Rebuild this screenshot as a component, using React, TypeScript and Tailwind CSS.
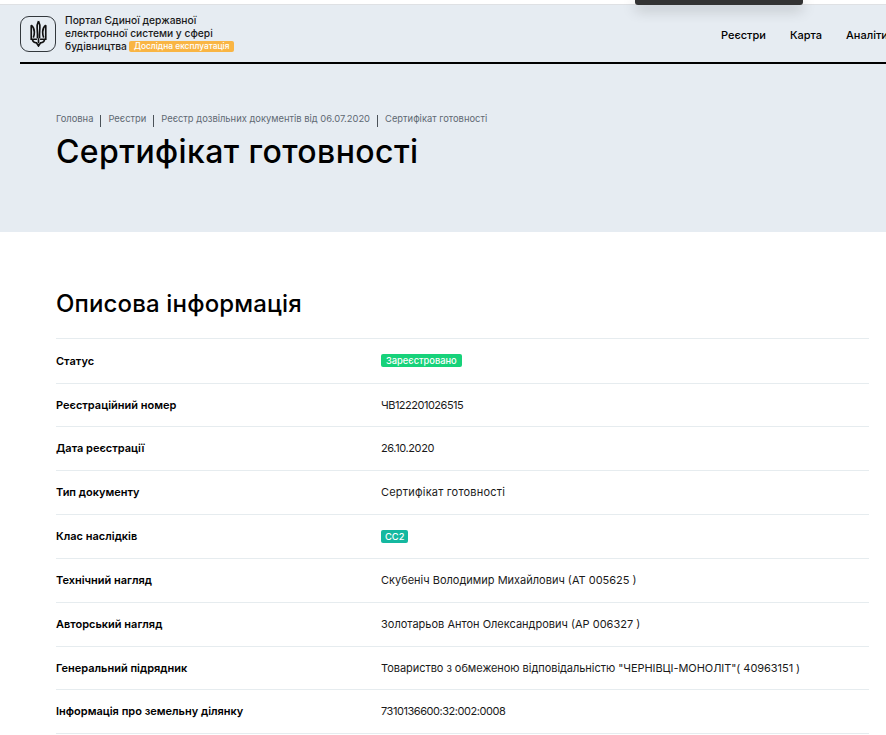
import React from 'react';

const rows: { label: string; value: string; badge?: string; spacing?: string }[] = [
  { label: 'Статус', value: 'Зареєстровано', badge: 'bg-[#17d27a] px-[5px]' },
  { label: 'Реєстраційний номер', value: 'ЧВ122201026515', spacing: 'tracking-[-0.5px]' },
  { label: 'Дата реєстрації', value: '26.10.2020', spacing: 'tracking-[-0.4px]' },
  { label: 'Тип документу', value: 'Сертифікат готовності', spacing: 'tracking-[0.2px]' },
  { label: 'Клас наслідків', value: 'СС2', badge: 'bg-[#14b8a0] px-[4px]' },
  { label: 'Технічний нагляд', value: 'Скубеніч Володимир Михайлович (АТ 005625 )' },
  { label: 'Авторський нагляд', value: 'Золотарьов Антон Олександрович (АР 006327 )' },
  { label: 'Генеральний підрядник', value: 'Товариство з обмеженою відповідальністю "ЧЕРНІВЦІ-МОНОЛІТ"( 40963151 )', spacing: 'tracking-[-0.05px]' },
  { label: 'Інформація про земельну ділянку', value: '7310136600:32:002:0008', spacing: 'tracking-[-0.45px]' },
];

const crumbs = ['Головна', 'Реєстри', 'Реєстр дозвільних документів від 06.07.2020', 'Сертифікат готовності'];

const Trident = () => (
  <svg width="17" height="27" viewBox="0 0 16 26" fill="none" stroke="#111" strokeWidth="1.6">
    <path d="M8 1c-1 2-1.600 4-1.300 7 .2 3 .5 6 .3 9.500M8 1c1 2 1.600 4 1.300 7-.2 3-.5 6-.3 9.500" />
    <path d="M1 5v13.500h5.500M15 5v13.500H9.500" />
    <path d="M1 5c2 1.500 3 3.500 3 6.500 0 2.500-.5 4.500-1 5.500M15 5c-2 1.500-3 3.500-3 6.500 0 2.500.5 4.500 1 5.500" />
    <path d="M2 18.500c.5 2.500 2.500 3.500 4 3.500l2 3 2-3c1.500 0 3.500-1 4-3.500" />
    <path d="M8 17.500v5" />
  </svg>
);

export default function App() {
  return (
    <div className="relative h-[735px] w-[886px] overflow-hidden bg-white font-['Inter',sans-serif] text-black">
      <div className="absolute left-[635px] top-0 z-10 h-[5px] w-[168px] rounded-b-[3px] bg-[#333333] shadow-[0_4px_14px_rgba(0,0,0,0.3)]" />

      <div className="h-[5px] border-b border-[#dfe1e4] bg-white" />

      <header className="h-[227px] bg-[#e6ecf2]">
        <div className="ml-5 flex h-[59px] items-center border-b-2 border-black">
          <div className="flex h-9 w-9 shrink-0 items-center justify-center rounded-[9px] border border-[#33383d]">
            <Trident />
          </div>
          <div className="ml-[9px] w-[190px] shrink-0 text-[10.250px] font-medium leading-[13px] text-[#1a1a1a]">
            <div className="whitespace-nowrap">Портал Єдиної державної</div>
            <div className="whitespace-nowrap">електронної системи у сфері</div>
            <div className="flex items-center whitespace-nowrap">
              будівництва
              <span className="ml-[2px] rounded-[2px] bg-[#f9b544] px-[5px] text-[8.400px] leading-[11px] text-white">
                Дослідна експлуатація
              </span>
            </div>
          </div>
          <nav className="flex shrink-0 gap-6 whitespace-nowrap pt-[4px] text-[11px] font-medium">
            <span className="ml-[466px]">Реєстри</span>
            <span>Карта</span>
            <span className="w-[60px]">Аналітика</span>
          </nav>
        </div>

        <div className="pl-14 pt-[47px]">
          <div className="flex h-[16px] items-center text-[9.400px] text-[#5f6972]">
            {crumbs.map((c, i) => (
              <React.Fragment key={c}>
                {i > 0 && <span className="mx-[7px] mt-[3px] h-[12px] w-px bg-[#4b5258]" />}
                <span className="whitespace-nowrap">{c}</span>
              </React.Fragment>
            ))}
          </div>
          <h1 className="mt-[5px] text-[32px] font-medium leading-[40px] tracking-[0.4px]">Сертифікат готовності</h1>
        </div>
      </header>

      <main className="ml-14 mr-[17px] pt-[58px]">
        <h2 className="h-[48px] text-[24px] font-medium leading-[28px] tracking-[0.15px]">Описова інформація</h2>
        <div className="border-t border-[#e6ecef]">
          {rows.map((r) => (
            <div
              key={r.label}
              className={`flex items-center border-b border-[#e6ecef] text-[11px] ${r.badge ? 'h-[44.800px]' : 'h-[43.600px]'}`}
            >
              <div className="w-[325px] shrink-0 font-semibold">{r.label}</div>
              {r.badge ? (
                <span className={`rounded-[2px] text-[9.300px] font-medium leading-[13px] text-white ${r.badge}`}>
                  {r.value}
                </span>
              ) : (
                <div className={`whitespace-nowrap text-[#1a1a1a] ${r.spacing ?? ''}`}>{r.value}</div>
              )}
            </div>
          ))}
        </div>
      </main>
    </div>
  );
}
